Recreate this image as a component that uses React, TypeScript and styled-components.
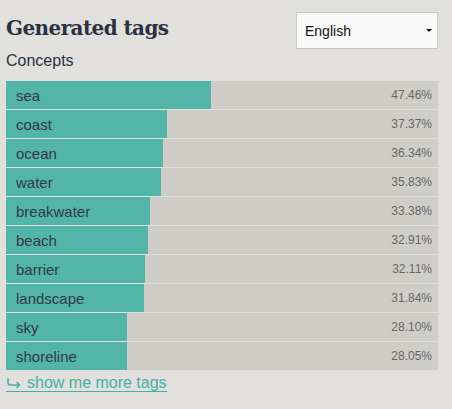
import React from "react";
import styled, { createGlobalStyle } from "styled-components";

const Global = createGlobalStyle`
  html, body { margin: 0; padding: 0; background: #e1e0dc; }
  body { font-family: "Liberation Sans", Arial, sans-serif; color: #333a44; }
`;

const Page = styled.div`
  width: 452px;
  height: 409px;
  box-sizing: border-box;
  padding: 12px 14px 0 6px;
  background: #e1e0dc;
`;

const Header = styled.div`
  display: flex;
  justify-content: space-between;
  align-items: flex-start;
  height: 37px;
`;

const Title = styled.h1`
  margin: 4px 0 0 0;
  font-family: "DejaVu Serif", serif;
  font-weight: bold;
  font-size: 21px;
  letter-spacing: -0.6px;
  color: #2b3140;
  line-height: 24px;
  transform: scaleX(0.95);
  transform-origin: left center;
`;

const Select = styled.div`
  width: 142px;
  height: 37px;
  box-sizing: border-box;
  border: 1px solid #c6c6c4;
  background: #f9f9f9;
  display: flex;
  align-items: center;
  justify-content: space-between;
  padding: 0 5px 0 8px;
  font-size: 14px;
  color: #111;
`;

const Caret = styled.span`
  width: 0;
  height: 0;
  border-left: 3px solid transparent;
  border-right: 3px solid transparent;
  border-top: 3px solid #111;
`;

const Section = styled.div`
  font-size: 16px;
  line-height: 18px;
  margin: 3px 0 11px 0;
  color: #2b3140;
`;

const List = styled.div`
  display: flex;
  flex-direction: column;
  gap: 1px;
  width: 432px;
`;

const Row = styled.div`
  position: relative;
  height: 28px;
  background: #cfcdc8;
  display: flex;
  align-items: center;
  justify-content: space-between;
`;

const Fill = styled.div`
  position: absolute;
  left: 0;
  top: 0;
  bottom: 0;
  background: #52b5a8;
`;

const Label = styled.span`
  position: relative;
  padding-left: 10px;
  font-size: 15px;
  color: #333a44;
`;

const Pct = styled.span`
  position: relative;
  padding-right: 6px;
  font-size: 12px;
  color: #666;
`;

const More = styled.a`
  display: inline-block;
  margin-top: 4px;
  font-size: 16px;
  line-height: 17px;
  color: #46b0a2;
  text-decoration: none;
  border-bottom: 1px solid #46b0a2;
  cursor: pointer;
`;

const Hook = styled.svg`
  width: 15px;
  height: 11px;
  margin-right: 6px;
  vertical-align: -1px;
`;

const data: [string, number][] = [
  ["sea", 47.46],
  ["coast", 37.37],
  ["ocean", 36.34],
  ["water", 35.83],
  ["breakwater", 33.38],
  ["beach", 32.91],
  ["barrier", 32.11],
  ["landscape", 31.84],
  ["sky", 28.1],
  ["shoreline", 28.05],
];

export default function App() {
  return (
    <>
      <Global />
      <Page>
        <Header>
          <Title>Generated tags</Title>
          <Select>
            <span>English</span>
            <Caret />
          </Select>
        </Header>
        <Section>Concepts</Section>
        <List>
          {data.map(([name, p]) => (
            <Row key={name}>
              <Fill style={{ width: `${p}%` }} />
              <Label>{name}</Label>
              <Pct>{p.toFixed(2)}%</Pct>
            </Row>
          ))}
        </List>
        <More>
          <Hook viewBox="0 0 15 11" fill="none" stroke="#46b0a2" strokeWidth="1.6">
            <path d="M2 0.5 V4.5 Q2 7 4.5 7 H13" />
            <path d="M10.5 4 L13.5 7 L10.5 10" />
          </Hook>
          show me more tags
        </More>
      </Page>
    </>
  );
}
